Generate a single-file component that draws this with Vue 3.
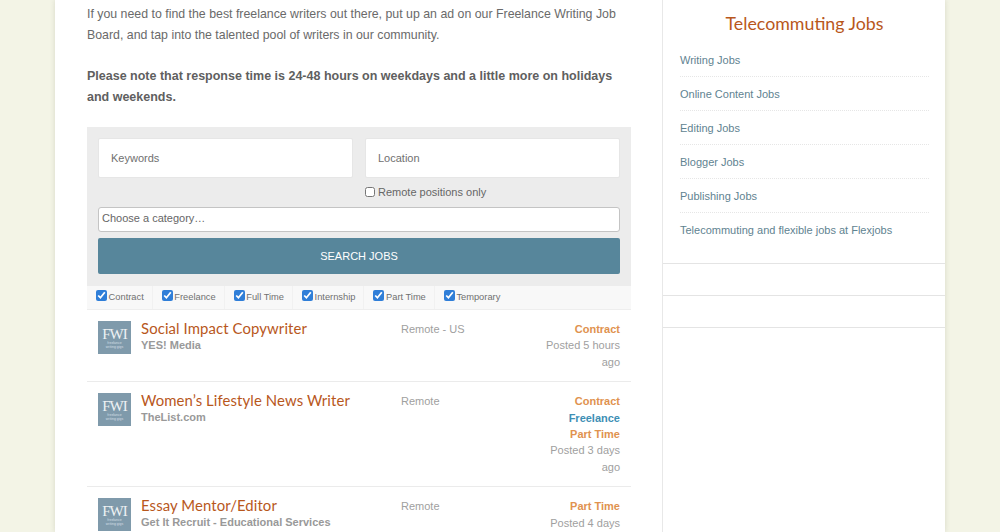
<script setup>
const filters = ['Contract', 'Freelance', 'Full Time', 'Internship', 'Part Time', 'Temporary']
const links = ['Writing Jobs', 'Online Content Jobs', 'Editing Jobs', 'Blogger Jobs', 'Publishing Jobs', 'Telecommuting and flexible jobs at Flexjobs']
const jobs = [
  { title: 'Social Impact Copywriter', company: 'YES! Media', location: 'Remote - US', types: ['Contract'], posted: 'Posted 5 hours ago' },
  { title: 'Women\u2019s Lifestyle News Writer', company: 'TheList.com', location: 'Remote', types: ['Contract', 'Freelance', 'Part Time'], posted: 'Posted 3 days ago' },
  { title: 'Essay Mentor/Editor', company: 'Get It Recruit - Educational Services', location: 'Remote', types: ['Part Time'], posted: 'Posted 4 days ago' }
]
</script>

<template>
  <div class="page">
    <div class="wrap">
      <main class="main">
        <p class="intro">If you need to find the best freelance writers out there, put up an ad on our Freelance Writing Job Board, and tap into the talented pool of writers in our community.</p>
        <p class="intro note">Please note that response time is 24-48 hours on weekdays and a little more on holidays and weekends.</p>

        <form class="search" @submit.prevent>
          <div class="fields">
            <input class="field" type="text" placeholder="Keywords" />
            <div class="loc">
              <input class="field" type="text" placeholder="Location" />
              <label class="remote"><input type="checkbox" />Remote positions only</label>
            </div>
          </div>
          <div class="select">Choose a category…</div>
          <button class="btn" type="button">SEARCH JOBS</button>
        </form>

        <ul class="filters">
          <li v-for="f in filters" :key="f" class="filter">
            <input type="checkbox" checked /><span>{{ f }}</span>
          </li>
        </ul>

        <ul class="jobs">
          <li v-for="j in jobs" :key="j.title" class="job">
            <div class="logo">
              <span class="fwi">FWI</span>
              <span class="tiny">freelance<br />writing gigs</span>
            </div>
            <div class="info">
              <h3 class="title">{{ j.title }}</h3>
              <div class="company">{{ j.company }}</div>
            </div>
            <div class="location">{{ j.location }}</div>
            <div class="meta">
              <div v-for="t in j.types" :key="t" class="type" :class="{ blue: t === 'Freelance' }">{{ t }}</div>
              <div class="posted">{{ j.posted }}</div>
            </div>
          </li>
        </ul>
      </main>

      <aside class="side">
        <div class="widget">
          <h2 class="side-title">Telecommuting Jobs</h2>
          <ul class="links">
            <li v-for="l in links" :key="l"><a>{{ l }}</a></li>
          </ul>
        </div>
        <div class="empty"></div>
        <div class="empty"></div>
      </aside>
    </div>
  </div>
</template>

<style>
html, body { margin: 0; height: 532px; overflow: hidden; background: #f3f4e6; }
</style>

<style scoped>
* { box-sizing: border-box; }
.page {
  height: 532px;
  overflow: hidden;
  background: #f3f4e6;
  font-family: "Liberation Sans", Arial, sans-serif;
  color: #666;
}
.wrap {
  width: 890px;
  height: 532px;
  margin-left: 55px;
  background: #fff;
  display: flex;
  box-shadow: 0 0 5px rgba(120, 120, 90, 0.22);
}
.main { width: 607px; padding: 4px 31px 0 32px; flex: none; }
.intro { margin: 0 0 20.5px; font-size: 12.35px; line-height: 20.8px; color: #6a6a6a; }
.note { font-size: 12.5px; font-weight: 700; color: #5f5f5f; margin-bottom: 19.3px; }
.search { background: #ececec; padding: 11px 11px 12px; height: 159px; }
.fields { display: grid; grid-template-columns: 1fr 1fr; gap: 12px; }
.loc { display: flex; flex-direction: column; min-width: 0; }
.field {
  display: block;
  width: 100%;
  height: 40px;
  border: 1px solid #e6e6e6;
  border-radius: 2px;
  background: #fff;
  padding: 0 12px;
  font: 11px "Liberation Sans", Arial, sans-serif;
  outline: none;
}
.field::placeholder { color: #707070; opacity: 1; }
.remote {
  display: flex;
  align-items: center;
  height: 16px;
  margin-top: 6px;
  font-size: 11px;
  color: #666;
}
.remote input { width: 10px; height: 10px; margin: 0 3px 0 0; }
.select {
  height: 25px;
  margin-top: 7px;
  background: #fff;
  border: 1px solid #c4c4c4;
  border-radius: 3px;
  padding: 0 3px;
  font-size: 11px;
  line-height: 21px;
  color: #666;
}
.btn {
  display: block;
  width: 100%;
  height: 36px;
  margin-top: 6px;
  background: #57869b;
  border: 0;
  border-radius: 2px;
  color: #fff;
  font: 11px "Liberation Sans", Arial, sans-serif;
}
.filters {
  display: flex;
  list-style: none;
  margin: 0;
  padding: 0;
  height: 24px;
  background: #f8f8f8;
  border-bottom: 1px solid #eee;
}
.filter {
  display: flex;
  align-items: center;
  padding: 0 8px 0 9px;
  border-right: 1px solid #f1f1f1;
  font-size: 9.3px;
  color: #707070;
}
.filter:last-child { border-right: 0; }
.filter input { width: 11px; height: 11px; margin: -3px 1.6px 0 0; accent-color: #2f7ed8; }
.jobs { list-style: none; margin: 0; padding: 0; }
.job {
  display: flex;
  align-items: flex-start;
  padding: 11px;
  border-bottom: 1px solid #ebebeb;
}
.logo {
  flex: none;
  width: 33px;
  height: 33px;
  background: #7f9aab;
  margin-right: 10px;
  color: #fff;
  text-align: center;
  overflow: hidden;
}
.fwi { display: block; font: 15px/14px "Liberation Serif", serif; margin-top: 6px; letter-spacing: -1px; color: #eef2f4; }
.tiny { display: block; font-size: 3.5px; line-height: 4px; color: #d5dfe5; }
.info { width: 260px; flex: none; }
.title {
  margin: 0 0 2px;
  font: 400 14.9px/14px Lato, sans-serif;
  letter-spacing: 0.1px;
  color: #b8571c;
}
.company { font-size: 11px; font-weight: 700; line-height: 16px; color: #999; }
.location { width: 90px; flex: none; font-size: 11px; line-height: 16.4px; color: #a0a0a0; }
.meta { width: 87px; margin-left: auto; text-align: right; font-size: 11px; line-height: 16.4px; color: #a0a0a0; }
.type { font-weight: 700; color: #e0924f; }
.type.blue { color: #3e8fb5; }
.side { flex: 1; border-left: 1px solid #e8e8e8; }
.widget { height: 264px; padding: 11px 16px 0 17px; border-bottom: 1px solid #e4e4e4; }
.side-title {
  margin: 0 0 8px;
  text-align: center;
  font: 400 17.8px/24px Lato, sans-serif;
  color: #b8571c;
}
.links { list-style: none; margin: 0; padding: 0; }
.links li {
  height: 34.1px;
  padding-top: 9px;
  font-size: 11px;
  line-height: 16px;
  color: #5f8391;
  border-bottom: 1px dotted #e6e6e6;
}
.links li:last-child { border-bottom: 0; }
.empty { height: 32px; border-bottom: 1px solid #e4e4e4; }
</style>
